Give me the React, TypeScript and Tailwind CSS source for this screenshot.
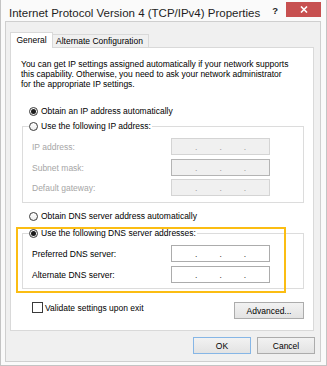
import React from "react";

const Radio = ({ checked }: { checked?: boolean }) => (
  <span className="flex items-center justify-center w-[9px] h-[9px] shrink-0 rounded-full border border-[#3a3a3a] bg-gradient-to-b from-white to-[#ececec]">
    {checked && <span className="w-[5px] h-[5px] rounded-full bg-[#1c1c1c]" />}
  </span>
);

const IpField = ({ disabled, dark }: { disabled?: boolean; dark?: boolean }) => {
  const box = disabled
    ? dark
      ? "border-[#b4b4b4] bg-[#f0f0f0] text-[#9a9a9a]"
      : "border-[#d4d4d4] bg-[#f0f0f0] text-[#9a9a9a]"
    : "border-[#acacac] bg-white text-[#333]";
  return (
    <div className={`flex items-center w-[99px] h-[17px] border pl-[23px] gap-[22px] ${box}`}>
      <span className="leading-[10px]">.</span>
      <span className="leading-[10px]">.</span>
      <span className="leading-[10px]">.</span>
    </div>
  );
};

const FieldRow = ({
  label,
  disabled,
  dark,
  className,
}: {
  label: string;
  disabled?: boolean;
  dark?: boolean;
  className?: string;
}) => (
  <div className={`flex items-center h-[17px] ${className ?? ""}`}>
    <span className={`w-[148px] pl-[9px] ${disabled ? "text-[#a6a6a6]" : "text-black"}`}>{label}</span>
    <IpField disabled={disabled} dark={dark} />
  </div>
);

const Button = ({ label, primary, className }: { label: string; primary?: boolean; className?: string }) => (
  <div
    className={`flex items-center justify-center h-[17px] border bg-gradient-to-b from-[#f2f2f2] to-[#e3e3e3] text-black ${
      primary ? "border-[#86b6e6]" : "border-[#acacac]"
    } ${className ?? ""}`}
  >
    {label}
  </div>
);

export default function App() {
  return (
    <div className="relative flex flex-col w-[327px] h-[366px] overflow-hidden border-x border-b border-[#c4c4c4] bg-[#fafafa] font-['Liberation_Sans',Arial,sans-serif] text-[8.5px] leading-[10px] text-black">
      {/* title bar */}
      <div className="flex items-start h-[21px] shrink-0">
        <div className="pl-[8px] pt-[7px] text-[11.5px] leading-[13px] text-[#1e1e1e] whitespace-nowrap">
          Internet Protocol Version 4 (TCP/IPv4) Properties
        </div>
        <div className="ml-auto flex items-start">
          <span className="mt-[6px] text-[9.5px] font-bold leading-[10px] text-[#222]">?</span>
          <div className="flex items-center justify-center mt-[2px] ml-[8px] mr-[5px] w-[35px] h-[15px] bg-[#c75050]">
            <svg width="8" height="7" viewBox="0 0 8 7">
              <path d="M1 0.5 L7 6.5 M7 0.5 L1 6.5" stroke="white" strokeWidth="1.6" />
            </svg>
          </div>
        </div>
      </div>

      {/* client area */}
      <div className="flex flex-col flex-1 ml-[4px] mr-[5px] mb-[3px] pl-[4px] pr-[6px] pt-[10px] border border-[#cfcfcf] bg-[#f0f0f0]">
        <div className="relative z-10 flex items-end -mb-px">
          <div className="flex items-center justify-center w-[43px] h-[16px] pb-[2px] border-x border-t border-[#d9d9d9] bg-white">
            General
          </div>
          <div className="flex items-center justify-center -ml-px w-[97px] h-[14px] pr-[2px] border border-[#d9d9d9] bg-[#f0f0f0]">
            Alternate Configuration
          </div>
        </div>

        <div className="flex flex-col w-[304px] h-[284px] border border-[#d9d9d9] bg-white">
          <p className="mt-[11px] pl-[10px] whitespace-nowrap">
            You can get IP settings assigned automatically if your network supports
            <br />
            this capability. Otherwise, you need to ask your network administrator
            <br />
            for the appropriate IP settings.
          </p>

          <div className="flex items-center gap-[3px] h-[10px] mt-[17px] pl-[18px]">
            <Radio checked />
            <span>Obtain an IP address automatically</span>
          </div>

          <fieldset className="mt-[5px] ml-[11px] mr-[9px] pt-[7px] pb-[6px] border border-[#dcdcdc]">
            <legend className="flex items-center gap-[3px] h-[10px] ml-[6px] pr-[1px] bg-white">
              <Radio />
              <span>Use the following IP address:</span>
            </legend>
            <FieldRow label="IP address:" disabled />
            <FieldRow label="Subnet mask:" disabled dark className="mt-[4px]" />
            <FieldRow label="Default gateway:" disabled className="mt-[3px]" />
          </fieldset>

          <div className="flex items-center gap-[3px] h-[10px] mt-[8px] pl-[18px]">
            <Radio />
            <span>Obtain DNS server address automatically</span>
          </div>

          <fieldset className="mt-[7px] ml-[11px] mr-[9px] pt-[7px] pb-[5px] border border-[#dcdcdc]">
            <legend className="flex items-center gap-[3px] h-[10px] ml-[6px] pr-[1px] bg-white">
              <Radio checked />
              <span>Use the following DNS server addresses:</span>
            </legend>
            <FieldRow label="Preferred DNS server:" />
            <FieldRow label="Alternate DNS server:" className="mt-[4px]" />
          </fieldset>

          <div className="flex items-start justify-between mt-[13px] ml-[21px] mr-[9px]">
            <div className="flex items-center gap-[2px] h-[11px]">
              <span className="w-[11px] h-[11px] border border-[#3a3a3a] bg-white" />
              <span>Validate settings upon exit</span>
            </div>
            <Button label="Advanced..." className="w-[70px]" />
          </div>
        </div>

        <div className="flex justify-end gap-[6px] mt-[6px] -mr-px">
          <Button label="OK" primary className="w-[58px]" />
          <Button label="Cancel" className="w-[58px]" />
        </div>
      </div>

      {/* highlight annotation */}
      <div className="absolute left-[15px] top-[227px] w-[270px] h-[66px] border-2 border-[#fbbd13] pointer-events-none" />
    </div>
  );
}
